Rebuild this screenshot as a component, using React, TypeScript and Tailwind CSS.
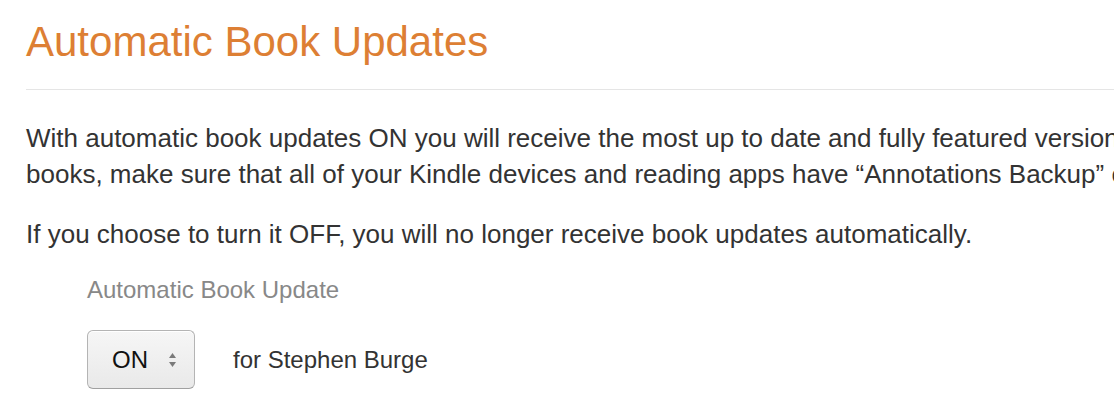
import React from 'react';

function UpDownArrows() {
  return (
    <svg width="9" height="16" viewBox="0 0 9 16" className="shrink-0">
      <path d="M4.5 1 L8 6 L1 6 Z" fill="#7a7a7a" />
      <path d="M4.5 15 L8 10 L1 10 Z" fill="#7a7a7a" />
    </svg>
  );
}

export default function App() {
  return (
    <div
      className="w-[1114px] h-[414px] overflow-hidden bg-white pl-[26px] pt-[21px]"
      style={{ fontFamily: '"Liberation Sans", Arial, Helvetica, sans-serif' }}
    >
      <h1 className="text-[42px] leading-[42px] text-[#dd7f34] whitespace-nowrap">
        Automatic Book Updates
      </h1>

      <div className="mt-[26px] h-px bg-[#e5e5e5]" />

      <p className="mt-[30px] text-[26px] leading-[36px] text-[#333333] whitespace-nowrap">
        With automatic book updates ON you will receive the most up to date and fully featured version of your books. To avoid losing annotations in your
        <br />
        books, make sure that all of your Kindle devices and reading apps have “Annotations Backup” enabled.
      </p>

      <p className="mt-[24px] text-[26px] leading-[36px] text-[#333333] whitespace-nowrap">
        If you choose to turn it OFF, you will no longer receive book updates automatically.
      </p>

      <div className="pl-[61px]">
        <div className="mt-[24px] text-[24px] leading-[28px] text-[#888888] whitespace-nowrap">
          Automatic Book Update
        </div>

        <div className="mt-[26px] flex items-center">
          <div className="flex h-[59px] w-[108px] items-center rounded-[6px] border border-[#b4b4b4] border-b-[#a0a0a0] bg-gradient-to-b from-[#f6f6f6] to-[#e9e9e9] pl-[24px] shadow-[inset_0_1px_0_#ffffff]">
            <span className="text-[24px] leading-none text-[#111111]">ON</span>
            <span className="ml-[20px] flex items-center">
              <UpDownArrows />
            </span>
          </div>
          <span className="ml-[38px] text-[24px] leading-none text-[#333333] whitespace-nowrap">
            for Stephen Burge
          </span>
        </div>
      </div>
    </div>
  );
}
